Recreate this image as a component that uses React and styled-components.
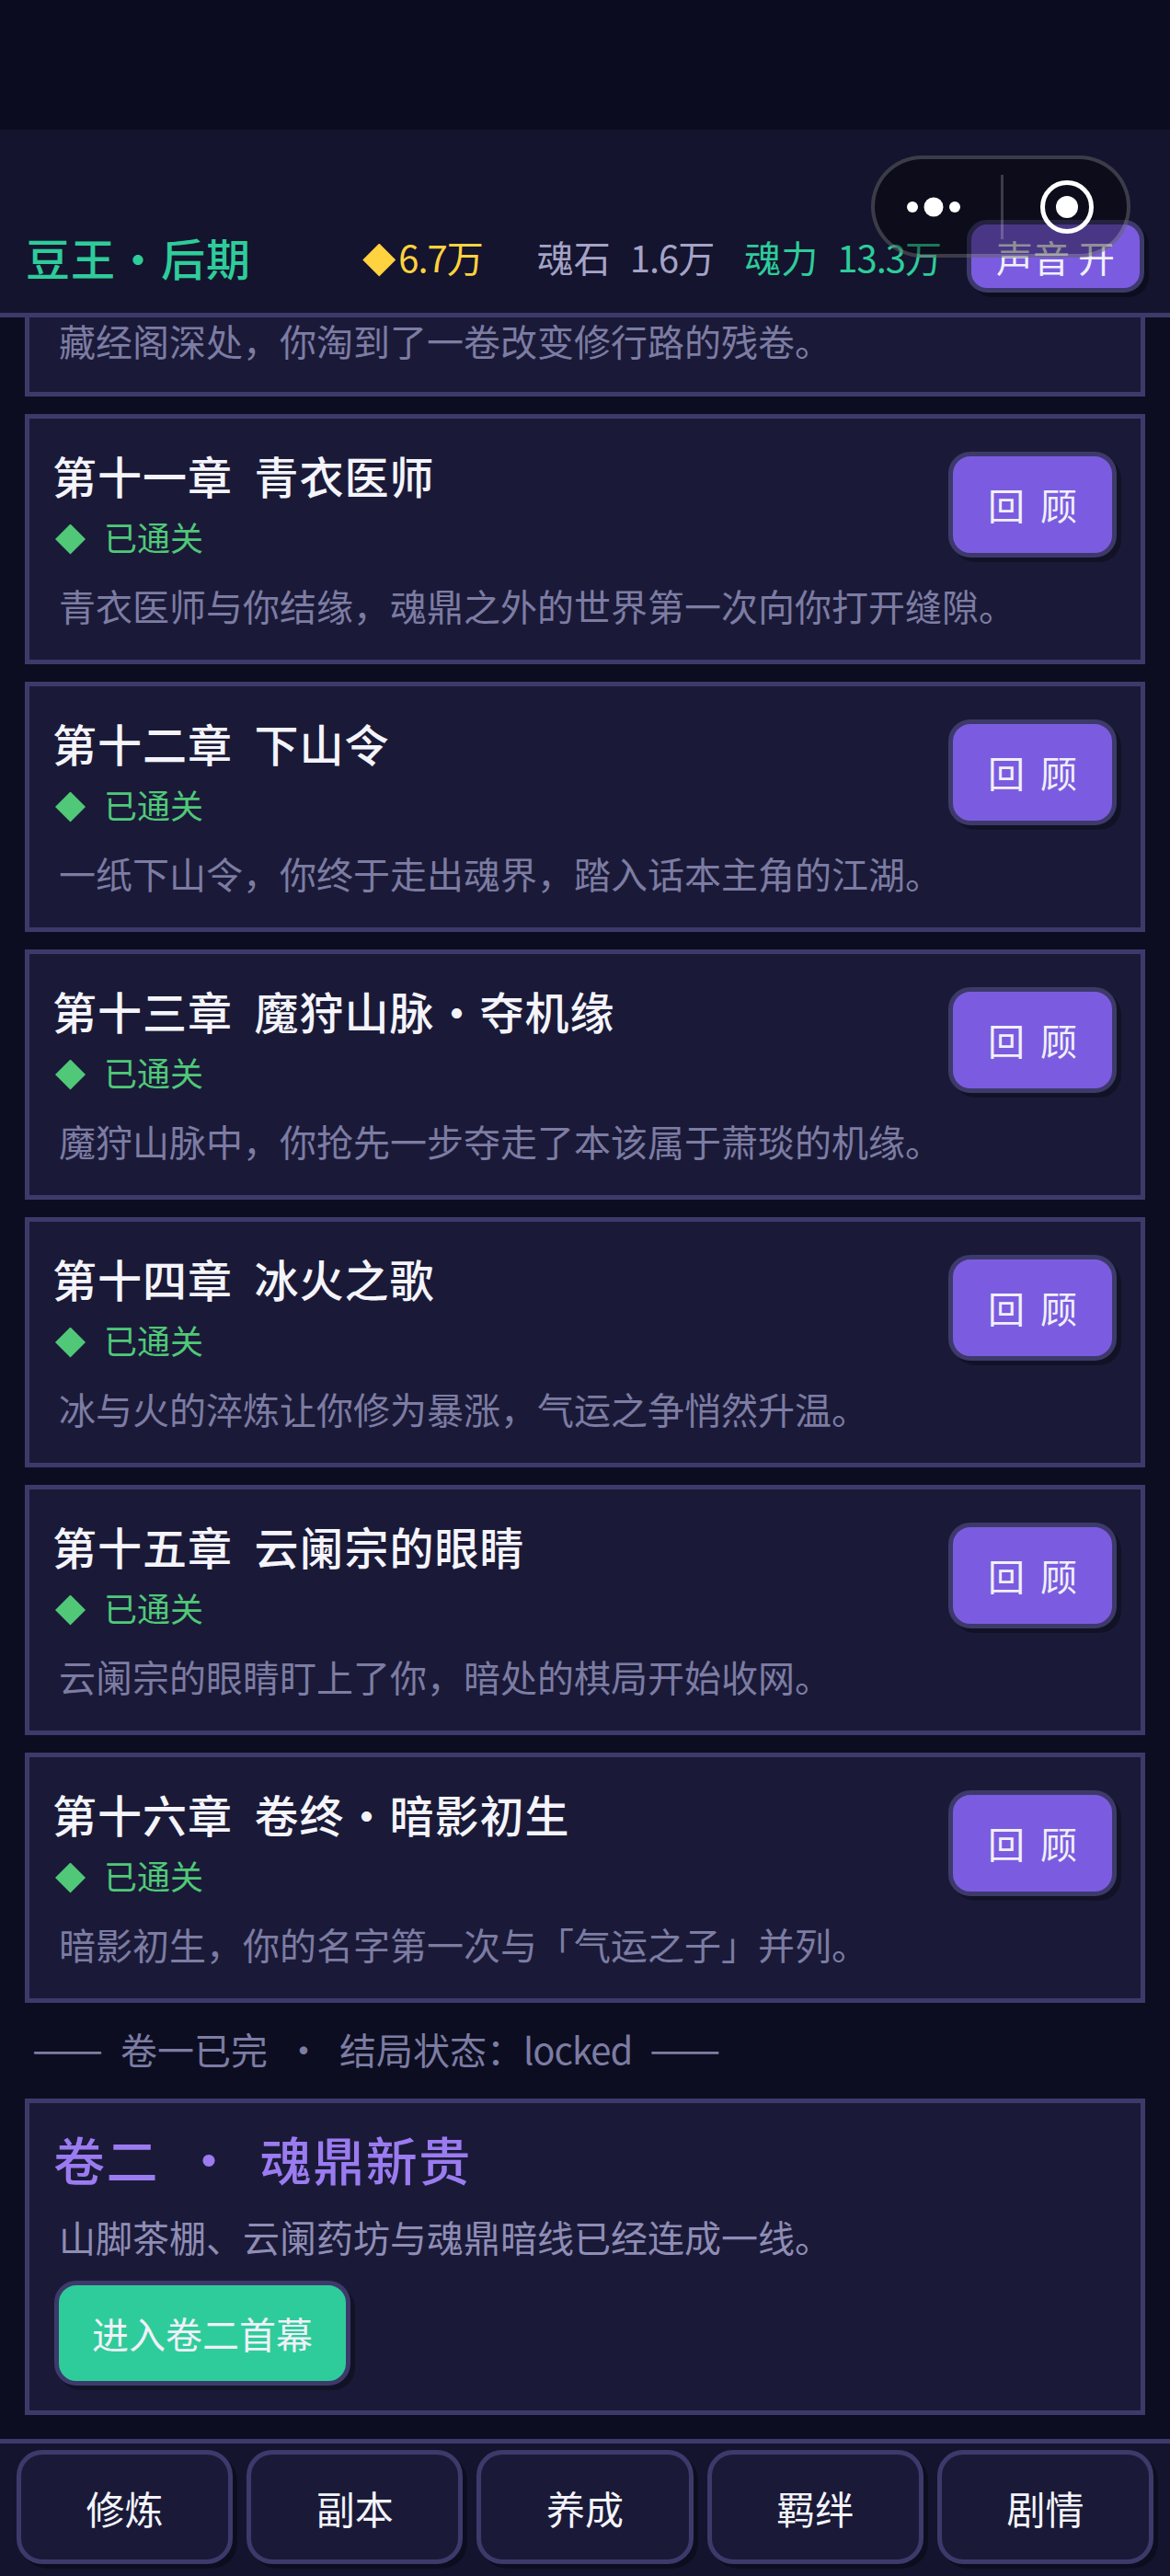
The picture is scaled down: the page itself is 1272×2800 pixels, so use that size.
import styled, { createGlobalStyle } from "styled-components";

const chapters = [
    { title: "第十一章  青衣医师", desc: "青衣医师与你结缘，魂鼎之外的世界第一次向你打开缝隙。" },
    { title: "第十二章  下山令", desc: "一纸下山令，你终于走出魂界，踏入话本主角的江湖。" },
    { title: "第十三章  魔狩山脉·夺机缘", desc: "魔狩山脉中，你抢先一步夺走了本该属于萧琰的机缘。" },
    { title: "第十四章  冰火之歌", desc: "冰与火的淬炼让你修为暴涨，气运之争悄然升温。" },
    { title: "第十五章  云阑宗的眼睛", desc: "云阑宗的眼睛盯上了你，暗处的棋局开始收网。" },
    { title: "第十六章  卷终·暗影初生", desc: "暗影初生，你的名字第一次与「气运之子」并列。" },
];

const tabs = ["修炼", "副本", "养成", "羁绊", "剧情"];

const App = () => {
    return (
        <Page>
            <GlobalStyle />
            <StatusBar />
            <Header>
                <Rank>豆王·后期</Rank>
                <Stat $color="#ffd23f">
                    <CoinMark />
                    <Latin>6.7</Latin>万
                </Stat>
                <Stat $color="#a5a3c6" $left={58}>
                    魂石 <Latin>1.6</Latin>万
                </Stat>
                <Stat $color="#2ecc9a" $left={32} $right={27}>
                    魂力 <Latin>13.3</Latin>万
                </Stat>
                <SoundButton>声音 开</SoundButton>
                <Capsule>
                    <svg width="64" height="24" viewBox="0 0 64 24">
                        <circle cx="8" cy="12" r="6" fill="#fff" />
                        <circle cx="31" cy="12" r="10.5" fill="#fff" />
                        <circle cx="54" cy="12" r="6" fill="#fff" />
                    </svg>
                    <CapsuleLine />
                    <svg width="58" height="58" viewBox="0 0 58 58">
                        <circle cx="29" cy="29" r="26.5" fill="none" stroke="#fff" strokeWidth="5" />
                        <circle cx="29" cy="29" r="12" fill="#fff" />
                    </svg>
                </Capsule>
            </Header>

            <Scroller>
                <ClippedCard>
                    <ClippedDesc>藏经阁深处，你淘到了一卷改变修行路的残卷。</ClippedDesc>
                </ClippedCard>

                {chapters.map((c) => (
                    <Card key={c.title}>
                        <CardTop>
                            <div>
                                <ChapterTitle>{c.title}</ChapterTitle>
                                <Cleared>
                                    <ClearedMark />
                                    已通关
                                </Cleared>
                            </div>
                            <ReviewButton>回 顾</ReviewButton>
                        </CardTop>
                        <Desc>{c.desc}</Desc>
                    </Card>
                ))}

                <EndLine>
                    <Dash>——</Dash> 卷一已完 · 结局状态：<Latin>locked</Latin> <Dash>——</Dash>
                </EndLine>

                <NextCard>
                    <NextTitle>卷二 · 魂鼎新贵</NextTitle>
                    <NextDesc>山脚茶棚、云阑药坊与魂鼎暗线已经连成一线。</NextDesc>
                    <EnterButton>进入卷二首幕</EnterButton>
                </NextCard>
            </Scroller>

            <TabBar>
                {tabs.map((t) => (
                    <Tab key={t}>{t}</Tab>
                ))}
            </TabBar>
        </Page>
    );
};

const GlobalStyle = createGlobalStyle`
    html, body {
        margin: 0;
        padding: 0;
        background: #0c0d20;
    }
    * {
        box-sizing: border-box;
    }
`;

const Page = styled.div`
    width: 1272px;
    height: 2800px;
    display: flex;
    flex-direction: column;
    overflow: hidden;
    background: #0c0d20;
    color: #f0f0f8;
    font-family: "Noto Sans CJK SC", "Noto Sans", sans-serif;
    white-space: pre;
`;

const StatusBar = styled.div`
    height: 141px;
    flex: none;
    background: #0b0c1f;
`;

const Header = styled.header`
    position: relative;
    height: 204px;
    flex: none;
    display: flex;
    align-items: center;
    padding: 96px 28px 20px 28px;
    background: #14142e;
    border-bottom: 5px solid #3d3a6b;
`;

const Rank = styled.div`
    flex: 1;
    font-size: 48px;
    font-weight: 500;
    letter-spacing: 1px;
    color: #2ecc9a;
`;

const Latin = styled.span`
    letter-spacing: -1px;
`;

const Dash = styled.span`
    font-size: 46px;
`;

const Stat = styled.div`
    display: flex;
    align-items: center;
    margin-left: ${(p) => p.$left || 0}px;
    margin-right: ${(p) => p.$right || 0}px;
    font-size: 40px;
    word-spacing: 12px;
    color: ${(p) => p.$color};
`;

const CoinMark = styled.span`
    width: 36px;
    height: 36px;
    margin: 8px 3px 0 0;
    background: #ffd23f;
    clip-path: polygon(50% 0, 100% 50%, 50% 100%, 0 50%);
`;

const SoundButton = styled.div`
    width: 193px;
    height: 79px;
    display: flex;
    align-items: center;
    justify-content: center;
    font-size: 40px;
    color: #f0f0f8;
    background: #7b5ce0;
    border: 5px solid #3d3a6b;
    border-radius: 22px;
    box-shadow: 5px 5px 0 rgba(0, 0, 0, 0.3);
`;

const Capsule = styled.div`
    position: absolute;
    top: 28px;
    left: 947px;
    width: 282px;
    height: 111px;
    display: flex;
    align-items: center;
    padding-left: 33px;
    background: rgba(0, 0, 0, 0.4);
    border: 4px solid rgba(255, 255, 255, 0.2);
    border-radius: 56px;
`;

const CapsuleLine = styled.span`
    width: 3px;
    height: 70px;
    margin: 0 40px;
    background: rgba(255, 255, 255, 0.2);
`;

const Scroller = styled.main`
    flex: 1;
    min-height: 0;
    display: flex;
    flex-direction: column;
    gap: 19px;
    padding: 0 27px;
`;

const Card = styled.section`
    height: 272px;
    flex: none;
    padding: 36px 28px 0;
    background: #1a1a38;
    border: 5px solid #3d3a6b;
`;

const ClippedCard = styled(Card)`
    height: 86px;
    padding-top: 0;
    border-top: 0;
`;

const CardTop = styled.div`
    display: flex;
    justify-content: space-between;
    height: 117px;
    margin-bottom: 22px;
`;

const ChapterTitle = styled.h2`
    margin: -3px 0 17px -3px;
    font-size: 48px;
    font-weight: 500;
    line-height: 56px;
    letter-spacing: 1px;
    color: #f4f4fa;
`;

const Cleared = styled.div`
    display: flex;
    align-items: center;
    height: 44px;
    font-size: 36px;
    color: #50c878;
`;

const ClearedMark = styled.span`
    width: 33px;
    height: 33px;
    margin: 6px 20px 0 0;
    background: #50c878;
    clip-path: polygon(50% 0, 100% 50%, 50% 100%, 0 50%);
`;

const Desc = styled.p`
    margin: 0 0 0 4px;
    font-size: 40px;
    line-height: 56px;
    color: #7d7ca3;
`;

const ClippedDesc = styled(Desc)`
    margin-top: -3px;
`;

const ReviewButton = styled.div`
    width: 183px;
    height: 115px;
    margin-right: -2px;
    padding-bottom: 2px;
    display: flex;
    align-items: center;
    justify-content: center;
    font-size: 40px;
    word-spacing: 8px;
    color: #f0f0f8;
    background: #7b5ce0;
    border: 5px solid #3d3a6b;
    border-radius: 24px;
    box-shadow: 5px 5px 0 rgba(0, 0, 0, 0.3);
`;

const EndLine = styled.div`
    height: 66px;
    margin-left: 8px;
    font-size: 40px;
    line-height: 56px;
    word-spacing: 10px;
    color: #7d7ca3;
`;

const NextCard = styled.section`
    height: 344px;
    flex: none;
    padding: 28px 28px 0;
    background: #1a1a38;
    border: 5px solid #3d3a6b;
`;

const NextTitle = styled.h2`
    margin: 0 0 0 -2px;
    font-size: 56px;
    font-weight: 500;
    line-height: 64px;
    letter-spacing: 1.5px;
    word-spacing: 12px;
    color: #9b7bf0;
`;

const NextDesc = styled(Desc)`
    margin-top: 25px;
    color: #8f8db5;
`;

const EnterButton = styled.div`
    width: 322px;
    height: 114px;
    margin: 20px 0 0 -1px;
    display: flex;
    align-items: center;
    justify-content: center;
    font-size: 40px;
    color: #f0f0f8;
    background: #2ecc9a;
    border: 5px solid #3d3a6b;
    border-radius: 24px;
    box-shadow: 5px 5px 0 rgba(0, 0, 0, 0.3);
`;

const TabBar = styled.nav`
    height: 149px;
    flex: none;
    display: flex;
    gap: 15px;
    padding: 7px 18px 13px;
    background: #14142e;
    border-top: 5px solid #3d3a6b;
`;

const Tab = styled.div`
    flex: 1;
    display: flex;
    align-items: center;
    justify-content: center;
    font-size: 42px;
    color: #f4f4fa;
    background: #1a1a38;
    border: 5px solid #3d3a6b;
    border-radius: 28px;
    box-shadow: 5px 5px 0 rgba(0, 0, 0, 0.3);
`;

export default App;
